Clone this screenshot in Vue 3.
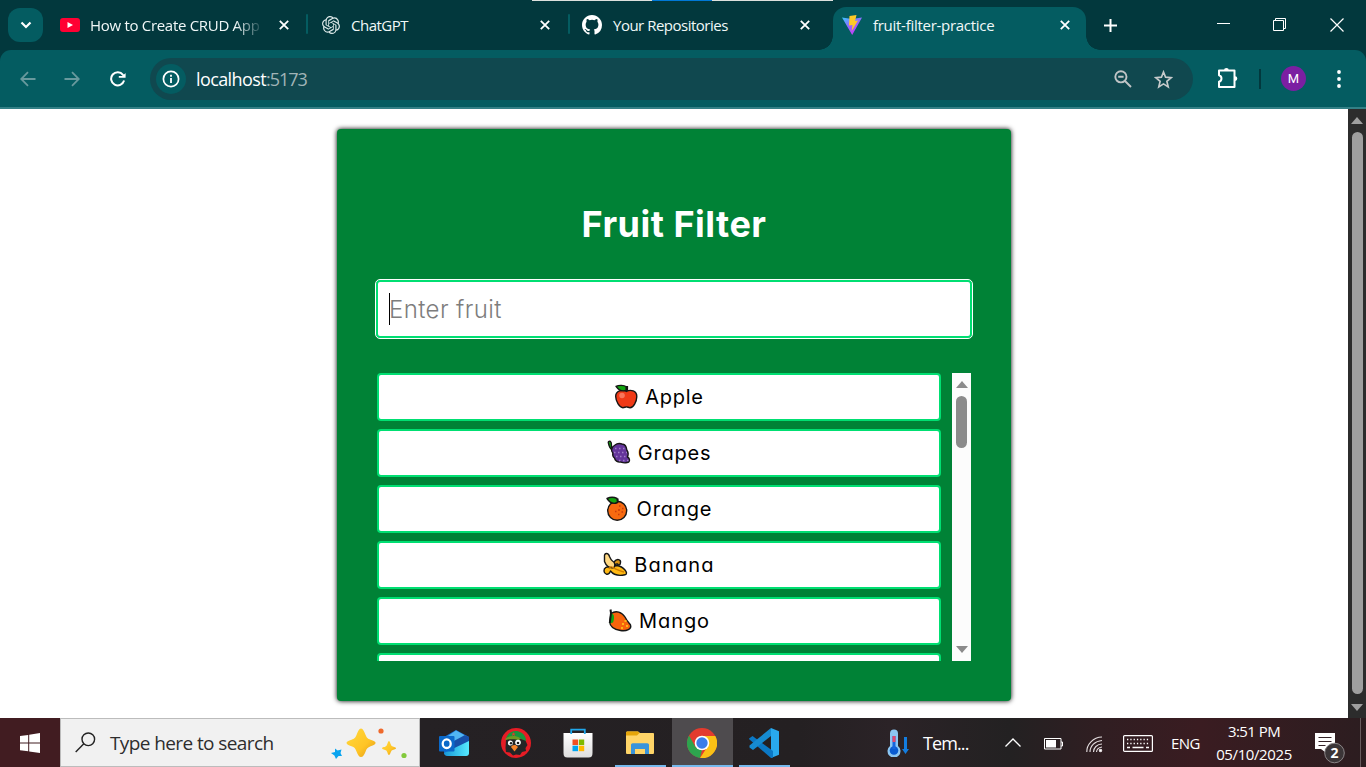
<script setup>
const fruits = [
  { name: 'Apple', spacing: 0.7 },
  { name: 'Grapes', spacing: 0.8 },
  { name: 'Orange', spacing: 0.9 },
  { name: 'Banana', spacing: 1.2 },
  { name: 'Mango', spacing: 0.9 },
  { name: '', spacing: 0 },
]
</script>

<template>
  <div class="screen">
    <header class="tabstrip">
      <div class="progress"><i></i></div>
      <button class="tab-search"><svg width="12" height="8" viewBox="0 0 12 8"><path d="M1.5 1.5 6 6l4.500-4.500" fill="none" stroke="#fff" stroke-width="2.2"/></svg></button>
      <div class="tab t1">
        <svg class="fav" width="20" height="14" viewBox="0 0 20 14"><rect width="20" height="14" rx="3" fill="#ff0033"/><path d="M7.500 4v6L13 7z" fill="#fff"/></svg>
        <span class="title fade">How to Create CRUD App</span>
        <svg class="x" viewBox="0 0 10 10"><path d="m.8.8 8.400 8.400M9.200.8.800 9.200"/></svg>
      </div>
      <i class="sep"></i>
      <div class="tab t2">
        <svg class="fav" width="18" height="18" viewBox="0 0 24 24" fill="#dce8e8"><path d="M22.282 9.821a5.985 5.985 0 0 0-.516-4.910 6.046 6.046 0 0 0-6.510-2.900A6.065 6.065 0 0 0 4.981 4.180a5.985 5.985 0 0 0-3.998 2.900 6.046 6.046 0 0 0 .743 7.097 5.980 5.980 0 0 0 .510 4.911 6.051 6.051 0 0 0 6.515 2.900A5.985 5.985 0 0 0 13.260 24a6.056 6.056 0 0 0 5.772-4.206 5.990 5.990 0 0 0 3.998-2.900 6.056 6.056 0 0 0-.748-7.073zM13.260 22.430a4.476 4.476 0 0 1-2.876-1.040l.141-.081 4.779-2.758a.795.795 0 0 0 .393-.681v-6.737l2.020 1.168a.071.071 0 0 1 .038.052v5.583a4.504 4.504 0 0 1-4.495 4.494zM3.600 18.304a4.470 4.470 0 0 1-.535-3.014l.142.085 4.783 2.759a.771.771 0 0 0 .780 0l5.843-3.369v2.332a.080.080 0 0 1-.033.062L9.740 19.950a4.500 4.500 0 0 1-6.140-1.646zM2.341 7.896a4.485 4.485 0 0 1 2.366-1.973V11.600a.766.766 0 0 0 .388.677l5.815 3.354-2.020 1.168a.076.076 0 0 1-.071 0l-4.830-2.786A4.504 4.504 0 0 1 2.341 7.872zm16.597 3.855-5.833-3.387L15.119 7.200a.076.076 0 0 1 .071 0l4.830 2.791a4.494 4.494 0 0 1-.676 8.105v-5.678a.790.790 0 0 0-.406-.667zm2.010-3.023-.142-.085-4.774-2.782a.776.776 0 0 0-.785 0L9.409 9.230V6.897a.066.066 0 0 1 .028-.061l4.830-2.787a4.500 4.500 0 0 1 6.680 4.660zM8.307 12.863l-2.020-1.164a.080.080 0 0 1-.038-.057V6.075a4.500 4.500 0 0 1 7.375-3.453l-.142.080-4.778 2.758a.795.795 0 0 0-.393.681zm1.097-2.365 2.602-1.500 2.607 1.500v2.999l-2.597 1.500-2.607-1.500z"/></svg>
        <span class="title gpt">ChatGPT</span>
        <svg class="x" viewBox="0 0 10 10"><path d="m.8.8 8.400 8.400M9.200.8.800 9.200"/></svg>
      </div>
      <i class="sep"></i>
      <div class="tab t3">
        <svg class="fav" width="20" height="20" viewBox="0 0 16 16" fill="#fff"><path d="M8 0C3.580 0 0 3.580 0 8c0 3.540 2.290 6.530 5.470 7.590.4.070.55-.17.55-.38 0-.19-.01-.82-.01-1.490-2.010.37-2.530-.49-2.690-.94-.09-.23-.48-.94-.82-1.130-.28-.15-.68-.52-.01-.53.630-.01 1.080.58 1.230.82.720 1.210 1.870.87 2.330.66.070-.52.280-.87.510-1.070-1.780-.2-3.640-.89-3.640-3.950 0-.87.310-1.590.820-2.150-.08-.2-.36-1.020.080-2.120 0 0 .67-.21 2.200.82a7.600 7.600 0 0 1 4 0c1.530-1.040 2.200-.82 2.200-.82.440 1.100.160 1.920.080 2.120.510.560.820 1.270.820 2.150 0 3.070-1.870 3.750-3.650 3.950.290.250.540.730.540 1.480 0 1.070-.01 1.930-.01 2.200 0 .21.150.460.550.380A8.010 8.010 0 0 0 16 8c0-4.420-3.580-8-8-8"/></svg>
        <span class="title repo">Your Repositories</span>
        <svg class="x" viewBox="0 0 10 10"><path d="m.8.8 8.400 8.400M9.200.8.800 9.200"/></svg>
      </div>
      <div class="tab active">
        <svg class="fav" width="20" height="20" viewBox="0 0 20 20"><defs><linearGradient id="v" x1="0" y1="0" x2=".6" y2="1"><stop stop-color="#38c8ff"/><stop offset=".55" stop-color="#9b63ff"/><stop offset="1" stop-color="#c53cf2"/></linearGradient></defs><path d="M0 2.500 10 4l10-1.500L10.200 20z" fill="url(#v)"/><path d="m7.500 1 7-1-1.500 6 3-.5L9.700 16l.800-6L7 10.500z" fill="#ffc928"/></svg>
        <span class="title vite">fruit-filter-practice</span>
        <svg class="x" viewBox="0 0 10 10"><path d="m.8.8 8.400 8.400M9.200.8.800 9.200"/></svg>
      </div>
      <svg class="plus" width="13" height="13" viewBox="0 0 13 13"><path d="M6.500 0v13M0 6.500h13" stroke="#fff" stroke-width="2"/></svg>
      <div class="winctl">
        <svg width="13" height="14" viewBox="0 0 13 14"><path d="M0 5.500h13" stroke="#fff"/></svg>
        <svg width="13" height="14" viewBox="0 0 13 14"><path d="M.5 2.500h10v10H.5zM2.500 2.500v-2h10v10h-2" fill="none" stroke="#fff"/></svg>
        <svg class="close" width="14" height="14" viewBox="0 0 14 14"><path d="m.5.5 13 13M13.500.5l-13 13" stroke="#fff" stroke-width="1.200"/></svg>
      </div>
    </header>

    <nav class="toolbar-back"><div class="toolbar">
      <svg class="back" width="16" height="16" viewBox="0 0 16 16"><path d="M15.500 8H1.500M8 1.200 1.200 8 8 14.800" fill="none" stroke="#68999d" stroke-width="1.800"/></svg>
      <svg class="forward" width="16" height="16" viewBox="0 0 16 16"><path d="M.5 8h14M8 1.200 14.800 8 8 14.800" fill="none" stroke="#68999d" stroke-width="1.800"/></svg>
      <svg class="reload" width="16" height="16" viewBox="0 0 16 16"><path d="M14.100 9.600A6.600 6.600 0 1 1 13 3.800l1.500 1.700" fill="none" stroke="#fff" stroke-width="2"/><path d="M15.600 0v6.800H8.800V5h3.700L15.600 2z" fill="#fff"/></svg>
      <div class="omnibox">
        <span class="info"><svg width="18" height="18" viewBox="0 0 18 18"><circle cx="9" cy="9" r="7.600" fill="none" stroke="#fff" stroke-width="1.700"/><path d="M9 8v5M9 4.800v1.900" stroke="#fff" stroke-width="1.800"/></svg></span>
        <span class="url">localhost<b>:5173</b></span>
        <svg class="mag" width="18" height="18" viewBox="0 0 18 18"><g fill="none" stroke="#c0c4c6" stroke-width="1.900"><circle cx="6.900" cy="6.800" r="5.600"/><path d="m11 11 6 6M4.200 6.800h5.400"/></g></svg>
        <svg width="19" height="19" viewBox="0 0 19 19"><path d="m9.500 2 2.100 5.200 5.600.500-4.300 3.700 1.300 5.500-4.700-3-4.700 3 1.300-5.500-4.300-3.700 5.600-.500z" fill="none" stroke="#c6cacb" stroke-width="1.700"/></svg>
      </div>
      <svg class="ext" width="22" height="22" viewBox="0 0 22 22"><path d="M2 3.500H17.500V20H2v-5.200c3.300-1 3.300-5.600 0-6.600z" fill="none" stroke="#fff" stroke-width="2" stroke-linejoin="round"/><path d="M7 3.500a2.400 2.400 0 0 1 4.800 0M18 9.300a2.300 2.300 0 0 1 0 4.600" fill="#fff"/></svg>
      <i class="divider"></i>
      <span class="avatar">M</span>
      <svg class="dots" width="4" height="18" viewBox="0 0 4 18" fill="#fff"><circle cx="2" cy="2" r="1.900"/><circle cx="2" cy="9" r="1.900"/><circle cx="2" cy="16" r="1.900"/></svg>
    </div></nav>

    <main class="page">
      <section class="card">
        <h1>Fruit Filter</h1>
        <div class="field"><i class="caret"></i><span>Enter fruit</span></div>
        <div class="list">
          <ul>
            <li v-for="(f, i) in fruits" :key="i">
              <svg v-if="f.name" width="26" height="26" viewBox="0 0 26 26" stroke="#161616" stroke-width="1.400" stroke-linejoin="round">
                <g v-if="i === 0"><path d="M12.500 7.500C9 5 1.400 6.500 1.700 12.500c.1 4.800 3.800 11.200 7.200 11.200 1.400 0 2.400-.8 3.600-.800s2.100.800 3.500.800c3.400 0 6.700-6.100 6.800-11 .2-5.900-6.400-7.700-10.300-5.200z" fill="#f03a17"/><circle cx="8" cy="11.500" r="2.800" fill="#f8765b" stroke="none"/><path d="M13 7V2" stroke-width="2.200"/><path d="M2 2.300c3.500-1.600 8-1 10 .200l.3 3.700C8.500 7.800 5 6.500 2 2.300z" fill="#12a510"/></g>
                <g v-else-if="i === 1"><path d="M1.500 3.500C.7 1.500 2 1 3.500 1.500 4.800 2.500 4.500 5 4.500 7l3 1.500-1.500 2C2.500 9 2 6 1.500 3.500z" fill="#12a510"/><path d="M8 5c2-1.600 5-1.800 8-.7 3 .2 3.500 3.200 4 6.200 1.500 2 1.300 4.500.500 6.500 2.500 1 3 5-.5 5.500-3 1-5.500-.2-6.500-.5-3 .5-5.500-1.500-6-4-2-1.500-2-3-1.700-5C3.500 11 4.500 7 8 5z" fill="#64359b"/><path d="M8 8.500h11M7 12.500h13M9 16.500h12M12 20.500h10" stroke="#a07fc8" stroke-width="1.500" stroke-dasharray="1.500 2.500"/></g>
                <g v-else-if="i === 2"><circle cx="11.200" cy="14.700" r="9.500" fill="#f66a10"/><path d="M11.500 6.500V2.500" stroke-width="2.200"/><path d="M1 2.500c4-1.800 8-1 10 0l.5 4C8 8.200 4 7 1 2.500z" fill="#12a510"/><path d="M13 10h1.500M16 12.500h1.500M12 14H14M9 15.500h1.500M15.500 16h1.500M12 18.500h1.500" stroke="#c93d0d" stroke-width="1.500"/></g>
                <g v-else-if="i === 3"><path d="M7.500 15c-3-.8-6.800.5-6.500 4 .2 3.500 4 4 5.500 2l1-2c3.500 4.500 9 5 14.500 3.800 2.500-.7 1.500-3 0-4.800-2-2.500-5-4-8.500-4.500z" fill="#ffb914"/><path d="M11 10c3-4 7-2.500 6.500.5 0 2.600-2 3-3 1.500-2.500-.5-2.500 1-3.500 2z" fill="#d99312"/><path d="M1.500 4.500c-.500-4 4-4 5 0 1 2 1 3 3 4.500 2.500 1.500 3 4 1.500 6.500-5 1.500-8.500-3-9.500-6z" fill="#ffd984"/><path d="M6 17c1-2.500 2.500-2.500 4-1.500 3 2.500 7 3 11 4.500" fill="none" stroke="#d17c00"/></g>
                <g v-else><path d="M3 5.500c5-3.500 11-1.500 14 3.500 2 4 4 6 5.500 8 1.500 4-4 6.500-10 5.500C6 21.500 2 18.500 1.700 14z" fill="#f8640c"/><path d="M2.500 5.500C6 5 7 9 5 14.500l-3.300 1z" fill="#12a510" stroke="none"/><path d="M2.500 1.500 3 5 1.800 15" fill="none" stroke-width="2"/><path d="M14 16h2M16.500 13h2M18 18h2M13 20h2" stroke="#ffb516" stroke-width="1.800"/></g>
              </svg>
              <span :style="{ letterSpacing: f.spacing + 'px' }">{{ f.name }}</span>
            </li>
          </ul>
          <div class="scroll inner"><i class="up"></i><i class="thumb"></i><i class="down"></i></div>
        </div>
      </section>
      <div class="scroll outer"><i class="up"></i><i class="thumb"></i><i class="down"></i></div>
    </main>

    <footer class="taskbar">
      <div class="start"><svg width="20" height="20" viewBox="0 0 20 20" fill="#fff"><path d="M0 3 8.200 1.900v7.500H0zM9.200 1.700 20 0v9.400H9.200zM0 10.400h8.200v7.800L0 17.200zM9.200 10.400H20V20L9.200 18.400z"/></svg></div>
      <div class="search">
        <svg width="21" height="21" viewBox="0 0 21 21"><g fill="none" stroke="#222" stroke-width="1.400"><circle cx="13.300" cy="7.300" r="6.300"/><path d="M8.800 11.800.700 20"/></g></svg>
        <span>Type here to search</span>
        <svg class="stars" width="78" height="32" viewBox="0 0 78 32"><defs><linearGradient id="gold" x2="1" y2="1"><stop stop-color="#ffd83d"/><stop offset=".6" stop-color="#ffc526"/><stop offset="1" stop-color="#e09716"/></linearGradient></defs><path d="M30 1.500c2 0 3.200 3.200 4.600 6.500 1.200 2.800 2 3.500 5 4.800 3 1.200 5 2 5 3.200s-2 2.200-5 3.300c-3 1.200-3.900 2.200-5 5.100-1.300 3.200-2.600 5.600-4.600 5.600s-3.200-2.500-4.500-5.600c-1.200-3-2-4-5-5.100-3-1.200-5-2.100-5-3.300s2-2 5-3.200c3-1.300 3.800-2 5-4.800 1.400-3.300 2.500-6.500 4.500-6.500z" fill="url(#gold)"/><path d="M58 14c1 0 1.600 4 2.700 5 1 1 4.300 1 4.300 2.200s-3.300 1.300-4.300 2.300S59.200 28 58 28s-1.600-3.500-2.700-4.500-4.300-1.200-4.300-2.300 3.300-1.300 4.300-2.300S57 14 58 14z" fill="url(#gold)"/><path d="m4 21.500 2.600 2 3.900-.9-1 3.500 1.500 3-3.500-.1L5 32l-1.600-3.600L0 26l4-1z" fill="#09a4ef"/><circle cx="50" cy="4" r="2.600" fill="#ef692b"/><circle cx="73" cy="28.500" r="2.600" fill="#82c93c"/></svg>
      </div>
      <div class="apps">
        <div><svg width="30" height="28" viewBox="0 0 30 28"><defs><linearGradient id="cy"><stop stop-color="#1798d7"/><stop offset="1" stop-color="#56eaff"/></linearGradient></defs><path d="M5 8 17 1l13 7v16l-3 3H9c-3 0-4-2-4-4z" fill="#1671d5"/><path d="m9 7 8-5.500L27 7 12 17z" fill="#51b5f2"/><path d="M13 13 26 6l4 2v4L14 21z" fill="#174fa8"/><path d="M5 24 30 12v12c0 2-1 3-3 3H9c-2 0-4-1-4-3z" fill="url(#cy)"/><rect y="7" width="15.500" height="15.500" rx="1" fill="#0b69c9"/><ellipse cx="7.700" cy="14.700" rx="4" ry="4.300" fill="none" stroke="#fff" stroke-width="2.300"/></svg></div>
        <div><svg width="30" height="30" viewBox="0 0 30 30"><circle cx="15" cy="15" r="15" fill="#e61c25"/><path d="m4.500 20 .5-8 3-2 16 1.500 2.500 5.500-2 3 .5 3-4 1-2 3-4-.5-3 1-3-3-4-.5z" fill="#252526"/><path d="M5 10.500C7 3 15 1 21 5c3 2 4 5 4 8l-7-3z" fill="#18953d"/><path d="M4.500 10.500c4-3 10-3.500 14.500-.5l-.5 2.500c-5-2-9-1.500-14-.5z" fill="#6d9a24"/><path d="m12.500 4 .6 1.500h1.400l-1 1 .5 1.500-1.500-.9-1.500.9.500-1.500-1-1H12z" fill="#e33b29"/><g fill="#fff"><circle cx="9.300" cy="15" r="2.500"/><circle cx="17" cy="14.500" r="2.800"/></g><g fill="#1b1b1b"><circle cx="10" cy="15.300" r="1.200"/><circle cx="17" cy="15" r="1.300"/></g><path d="M10 19c1-2.500 5-3 7 0l-3.500 4.500z" fill="#f88429"/></svg></div>
        <div><svg width="30" height="30" viewBox="0 0 30 30"><defs><linearGradient id="bag" x2="0" y2="1"><stop stop-color="#fff"/><stop offset="1" stop-color="#ddd"/></linearGradient></defs><path d="M.5 5h29v20c0 3-1 4.500-4 4.500h-21c-3 0-4-1.500-4-4.500z" fill="url(#bag)"/><path d="M8.200 6V1.700h13.600V6" fill="none" stroke="#20a8ec" stroke-width="1.800"/><path d="M9.500 11.500H15V17H9.500z" fill="#f25022"/><path d="M15.800 11.500h5.400V17h-5.400z" fill="#7fba00"/><path d="M9.500 17.700H15v5.500H9.500z" fill="#00a4ef"/><path d="M15.800 17.700h5.400v5.500h-5.400z" fill="#ffb900"/></svg></div>
        <div class="open"><svg width="28" height="24" viewBox="0 0 28 24"><path d="M0 2c0-1 .7-1.500 1.500-1.500H12L14 2h13c.7 0 1 .5 1 1v18.500c0 1-.5 1.500-1.500 1.500h-25C.5 23 0 22.500 0 21.500z" fill="#ffd568"/><path d="M0 2C0 1 .5.500 1.500.500H12L13.500 2 11 4.500H0z" fill="#e5a50a"/><path d="M5 23V14c0-1 .7-1.700 1.700-1.700h14.600c1 0 1.700.7 1.700 1.700v9h-4v-5H9v5z" fill="#3994db"/></svg></div>
        <div class="open current"><svg width="30" height="30" viewBox="0 0 30 30"><circle cx="15" cy="15" r="15" fill="#e33b2e"/><path d="M2 7.500 8.500 19 15 22l-2 8A15 15 0 0 1 2 7.500z" fill="#2da44e"/><path d="M15 8h13.300A15 15 0 0 1 13 30l7.500-11.200z" fill="#fbc116"/><circle cx="15" cy="15" r="7.300" fill="#fff"/><circle cx="15" cy="15" r="5.700" fill="#3b7de9"/></svg></div>
        <div class="open"><svg width="30" height="30" viewBox="0 0 30 30"><path d="m22 0 8 3.200v23.600L22 30z" fill="#29a9ed"/><path d="M0 10.500 3.500 8 24 23v6.500L22 30 .5 11.500z" fill="#0b78c5"/><path d="M22 0v8L4 22l-3.500-2.500v-2z" fill="#168bd1"/></svg></div>
      </div>
      <div class="weather"><svg width="22" height="28" viewBox="0 0 22 28"><path d="M3 17V4.500a4 4 0 0 1 8 0V17a6.500 6.500 0 1 1-8 0z" fill="#8bc6f2"/><circle cx="7" cy="21.500" r="4.300" fill="#085bd1"/><path d="M5.500 20V7h3v13z" fill="#1764dc"/><path d="M5.500 13V7h3v6z" fill="#e0476c"/><path d="M17 8h3v12h2l-3.500 5-3.500-5h2z" fill="#137de0"/></svg><span>Tem...</span></div>
      <div class="tray">
        <svg class="chev" width="16" height="9" viewBox="0 0 16 9"><path d="M.5 8.500 8 1l7.500 7.500" fill="none" stroke="#fff" stroke-width="1.300"/></svg>
        <svg class="battery" width="19" height="12" viewBox="0 0 19 12"><path d="M.5.500h16.500v10.500H.5zM17 4h1.500v4H17" fill="none" stroke="#fff"/><path d="M2 2h10v7.500H2z" fill="#fff"/></svg>
        <svg class="wifi" width="17" height="17" viewBox="0 0 17 17" fill="none" stroke="#e5dfe1" stroke-width="1.100"><path d="M.8 16C.5 9 7 1 16 1M4 16C4 10 9 5 16 4.500M7.500 16c0-4 3.500-8 8.500-8M10.500 16c.2-2.500 2-4.500 5.500-5"/><circle cx="14.500" cy="14.500" r="1.200" fill="#fff"/></svg>
        <svg class="kbd" width="30" height="17" viewBox="0 0 30 17"><rect x=".6" y=".6" width="28.800" height="15.800" rx="1" fill="none" stroke="#fff" stroke-width="1.200"/><path d="M4 4.500h23M4 8.500h23" stroke="#fff" stroke-width="1.300" stroke-dasharray="1.300 2"/><path d="M4 12.500h3M9.500 12.500h11M23 12.500h3" stroke="#fff" stroke-width="1.300"/></svg>
        <span class="lang">ENG</span>
        <div class="clock"><span class="time">3:51 PM</span><span class="date">05/10/2025</span></div>
        <svg class="notice" width="30" height="31" viewBox="0 0 30 31"><path d="M0 0h20v16H10v3l-4-3H0z" fill="#fff"/><path d="M3.500 4.500h13M3.500 8.500h13M3.500 12.500h7" stroke="#352327" stroke-width="1.200"/><circle cx="19.500" cy="20" r="9.800" fill="#3b3537" stroke="#8a8587"/><text x="19.500" y="25" text-anchor="middle" fill="#fff" font-size="14" font-weight="700">2</text></svg>
      </div>
    </footer>
  </div>
</template>

<style>
body { margin: 0; overflow: hidden; }
</style>

<style scoped>
* { box-sizing: border-box; }
svg { display: block; flex: none; }
.screen { width: 1366px; height: 767px; display: flex; flex-direction: column; overflow: hidden; background: #fff; font-family: "Open Sans", "Noto Sans", sans-serif; }
.tabstrip { position: relative; height: 50px; background: #02383d; display: flex; align-items: flex-start; color: #f1f8f8; }
.progress { position: absolute; left: 532px; top: 0; width: 301px; height: 1px; background: #dce0dd; }
.progress i { display: block; margin-left: 120px; width: 60px; height: 1px; background: #0078d7; }
.tab-search { margin: 8px 0 0 8px; width: 35px; height: 34px; padding: 0; border: 0; border-radius: 12px; background: #045c61; display: grid; place-items: center; }
.tab { height: 50px; display: flex; align-items: center; }
.fav { margin-right: 10px; }
.t1 { width: 263px; padding: 0 17px 0 17px; }
.t2 { width: 260px; padding: 0 18px 0 14px; }
.t3 { width: 263px; padding: 0 23px 0 12px; }
.active { position: relative; width: 253px; height: 43px; margin-top: 7px; padding: 0 16px 7px 9px; background: #045c61; border-radius: 13px 13px 0 0; }
.active::before, .active::after { content: ""; position: absolute; bottom: 0; width: 14px; height: 14px; }
.active::before { left: -14px; background: radial-gradient(circle at 0 0, transparent 13.5px, #045c61 14px); }
.active::after { right: -14px; background: radial-gradient(circle at 100% 0, transparent 13.5px, #045c61 14px); }
.title { font-size: 15px; line-height: 20px; white-space: nowrap; }
.fade { width: 171px; overflow: hidden; letter-spacing: -.3px; -webkit-mask-image: linear-gradient(90deg, #000 145px, transparent 174px); mask-image: linear-gradient(90deg, #000 145px, transparent 174px); }
.gpt { letter-spacing: -.5px; margin-left: 1px; }
.repo { letter-spacing: -.5px; margin-left: 1px; }
.vite { letter-spacing: -.28px; margin-left: 1px; }
.x { width: 10px; height: 10px; margin-left: auto; }
.x path { fill: none; stroke: #fff; stroke-width: 1.8; }
.sep { width: 2px; height: 20px; margin-top: 14px; background: #045c61; border-radius: 1px; }
.plus { margin: 19px 0 0 18px; }
.winctl { display: flex; gap: 43px; margin: 18px 22px 0 auto; }
.winctl .close { margin-left: 1px; }
.toolbar-back { background: #02383d; }
.toolbar { height: 59px; background: #045c61; border-radius: 11px 11px 0 0; border-bottom: 2px solid #338086; display: flex; align-items: center; }
.back { margin-left: 20px; }
.forward { margin-left: 28px; }
.reload { margin-left: 30px; }
.omnibox { width: 1043px; height: 42px; margin: 1px 0 0 24px; padding: 0 20px 0 6px; border-radius: 21px; background: #10484f; display: flex; align-items: center; }
.info { width: 30px; height: 30px; border-radius: 50%; background: #045c61; display: grid; place-items: center; }
.url { margin-left: 10px; font-size: 18px; line-height: 24px; letter-spacing: -.6px; color: #fff; }
.url b { font-weight: 400; color: #a0b4b7; letter-spacing: -1.05px; }
.mag { margin: 0 22px 0 auto; }
.ext { margin-left: 24px; margin-top: -1px; }
.divider { width: 2px; height: 20px; margin-left: 20px; background: #02383d; }
.avatar { width: 25px; height: 25px; margin-left: 20px; border-radius: 50%; background: #7b1fa2; color: #fff; font: 13px/25px Roboto, sans-serif; text-align: center; }
.dots { margin-left: 30.5px; }
.page { height: 609px; display: flex; align-items: flex-start; }
.card { width: 674px; height: 572px; margin: 20px 337px 0; padding: 74px 40px 40px; background: #008236; border-radius: 4px; box-shadow: 0 0 5px #000; font-family: Inter, sans-serif; font-feature-settings: "cv11" 1; }
h1 { margin: 0; height: 42px; text-align: center; color: #fff; font-size: 36px; line-height: 42px; font-weight: 700; letter-spacing: .5px; }
.field { width: 596px; height: 58px; margin: 35px 0 0 -1px; background: #fff; border: 2px solid #00df72; border-radius: 4px; outline: 1px solid #fff; display: flex; align-items: center; padding-left: 11px; color: #7d7d7d; font-size: 24px; letter-spacing: .4px; font-weight: 350; }
.caret { width: 1px; height: 32px; background: #000; margin-right: -1px; }
.list { margin-top: 35px; height: 288px; display: flex; overflow: hidden; }
ul { margin: 0 11px 0 0; padding: 0; width: 564px; list-style: none; display: flex; flex-direction: column; gap: 8px; }
li { flex: none; height: 48px; border: 2px solid #00df72; border-radius: 4px; background: #fff; display: flex; align-items: center; justify-content: center; gap: 5px; font-size: 20px; color: #000; }
.scroll { display: flex; flex-direction: column; align-items: center; }
.scroll .up, .scroll .down { border: 6.5px solid transparent; border-top: 0; border-bottom: 7px solid #8b8b8b; }
.scroll .down { border-bottom: 0; border-top: 7px solid #8b8b8b; margin-top: auto; }
.thumb { width: 11px; border-radius: 6px; background: #8b8b8b; margin-top: 8px; }
.inner { width: 19px; height: 288px; background: #fcfcfc; padding: 8px 0; }
.inner .thumb { height: 52px; }
.outer { width: 18px; height: 609px; background: #2c2c2c; padding: 8px 0 7px; }
.outer .thumb { height: 562px; margin-top: 8px; background: #9f9f9f; }
.outer .up { border-bottom-color: #9f9f9f; }
.outer .down { border-top-color: #9f9f9f; }
.taskbar { height: 49px; display: flex; color: #fff; background: linear-gradient(90deg, #411c21 0, #252124 420px, #242022 800px, #2b2327 890px, #232122 1010px, #301e22 1100px, #3a1c21 1200px, #2c1d20 1366px); }
.start { width: 60px; display: grid; place-items: center; background: #411c21; }
.search { width: 360px; background: #f1f1f1; border: 1px solid #bcbcbc; display: flex; align-items: center; padding: 0 10px 0 14px; }
.search span { margin-left: 14px; color: #2d2d2d; font-size: 19px; letter-spacing: -.6px; white-space: nowrap; }
.stars { margin-left: auto; margin-top: 1px; }
.apps { display: flex; margin-left: 3px; }
.apps > div { width: 62px; display: flex; align-items: center; justify-content: center; padding-top: 1px; }
.apps .open { width: 51px; margin: 0 5.500px; box-shadow: inset 0 -2px #76b9ed; }
.apps .current { width: 61px; margin: 0 .5px; background: #4e4b4e; }
.weather { display: flex; align-items: center; margin-left: 92px; width: 118px; padding-top: 1px; }
.weather span { margin-left: 14px; font-size: 18px; letter-spacing: -.9px; }
.tray { display: flex; align-items: center; flex: 1; border-right: 1px solid #685b5d; margin-right: 5px; }
.battery { margin-left: 23px; margin-top: 2px; }
.wifi { margin-left: 23px; margin-top: 3px; }
.kbd { margin-left: 20px; margin-top: 1px; }
.lang { width: 28px; margin-left: 18px; font-size: 15px; letter-spacing: -.6px; }
.clock { width: 78px; margin-left: 16px; height: 46px; display: flex; flex-direction: column; align-items: center; font-size: 15px; line-height: 23px; white-space: nowrap; }
.time { letter-spacing: -.55px; }
.date { letter-spacing: -.4px; }
.notice { margin-left: 22px; margin-top: 12px; }
</style>
